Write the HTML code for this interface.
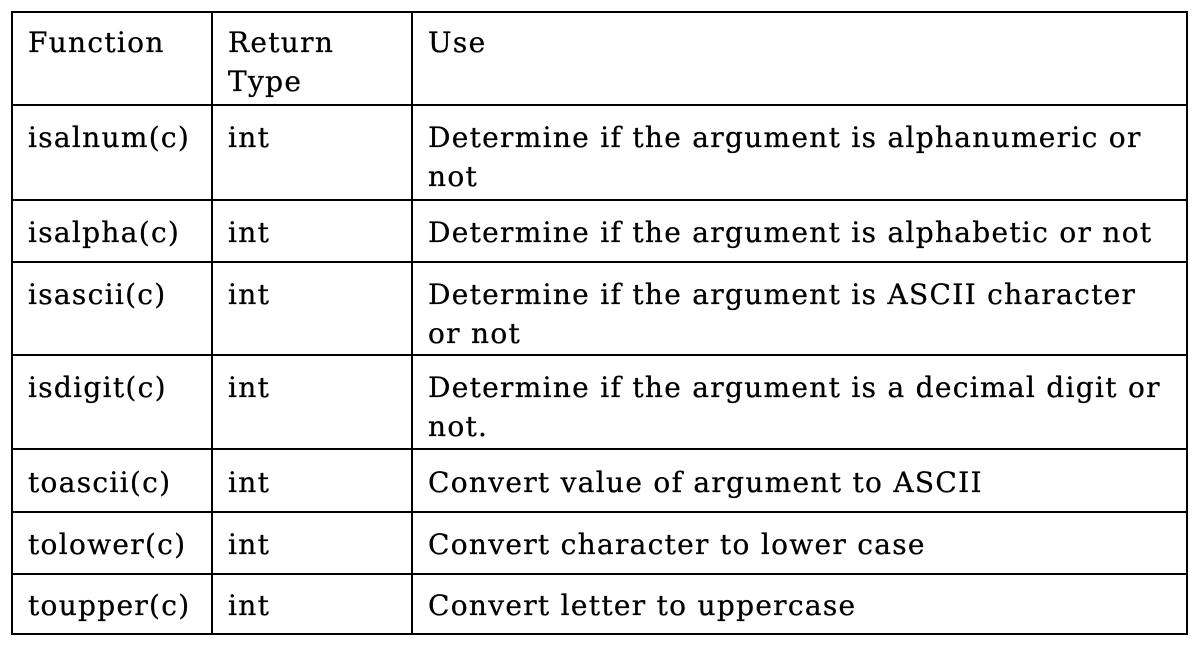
<!DOCTYPE html>
<html><head><style>
body{margin:0;background:#fff;width:1199px;height:647px;position:relative;overflow:hidden;font-family:"DejaVu Serif","Liberation Serif",serif;font-size:28px;letter-spacing:1.3px;color:#000;-webkit-text-stroke:0.3px #000}
.h{position:absolute;left:11px;width:1177px;height:2px;background:#000}
.v{position:absolute;top:11px;height:624px;width:2px;background:#000}
.t{position:absolute;line-height:39px;white-space:nowrap}
</style></head><body>
<div class="h" style="top:11px"></div>
<div class="h" style="top:104px"></div>
<div class="h" style="top:199px"></div>
<div class="h" style="top:261px"></div>
<div class="h" style="top:354px"></div>
<div class="h" style="top:448px"></div>
<div class="h" style="top:511px"></div>
<div class="h" style="top:573px"></div>
<div class="h" style="top:633px"></div>
<div class="v" style="left:11px"></div>
<div class="v" style="left:211px"></div>
<div class="v" style="left:411px"></div>
<div class="v" style="left:1186px"></div>

<div class="t" style="left:28px;top:23px">Function</div>
<div class="t" style="left:228px;top:23px">Return<br>Type</div>
<div class="t" style="left:428px;top:23px">Use</div>

<div class="t" style="left:28px;top:118px">isalnum(c)</div>
<div class="t" style="left:228px;top:118px">int</div>
<div class="t" style="left:428px;top:118px">Determine if the argument is alphanumeric or<br>not</div>

<div class="t" style="left:28px;top:213px">isalpha(c)</div>
<div class="t" style="left:228px;top:213px">int</div>
<div class="t" style="left:428px;top:213px">Determine if the argument is alphabetic or not</div>

<div class="t" style="left:28px;top:275px">isascii(c)</div>
<div class="t" style="left:228px;top:275px">int</div>
<div class="t" style="left:428px;top:275px">Determine if the argument is ASCII character<br>or not</div>

<div class="t" style="left:28px;top:368px">isdigit(c)</div>
<div class="t" style="left:228px;top:368px">int</div>
<div class="t" style="left:428px;top:368px">Determine if the argument is a decimal digit or<br>not.</div>

<div class="t" style="left:28px;top:463px">toascii(c)</div>
<div class="t" style="left:228px;top:463px">int</div>
<div class="t" style="left:428px;top:463px">Convert value of argument to ASCII</div>

<div class="t" style="left:28px;top:525px">tolower(c)</div>
<div class="t" style="left:228px;top:525px">int</div>
<div class="t" style="left:428px;top:525px">Convert character to lower case</div>

<div class="t" style="left:28px;top:586px">toupper(c)</div>
<div class="t" style="left:228px;top:586px">int</div>
<div class="t" style="left:428px;top:586px">Convert letter to uppercase</div>
</body></html>
